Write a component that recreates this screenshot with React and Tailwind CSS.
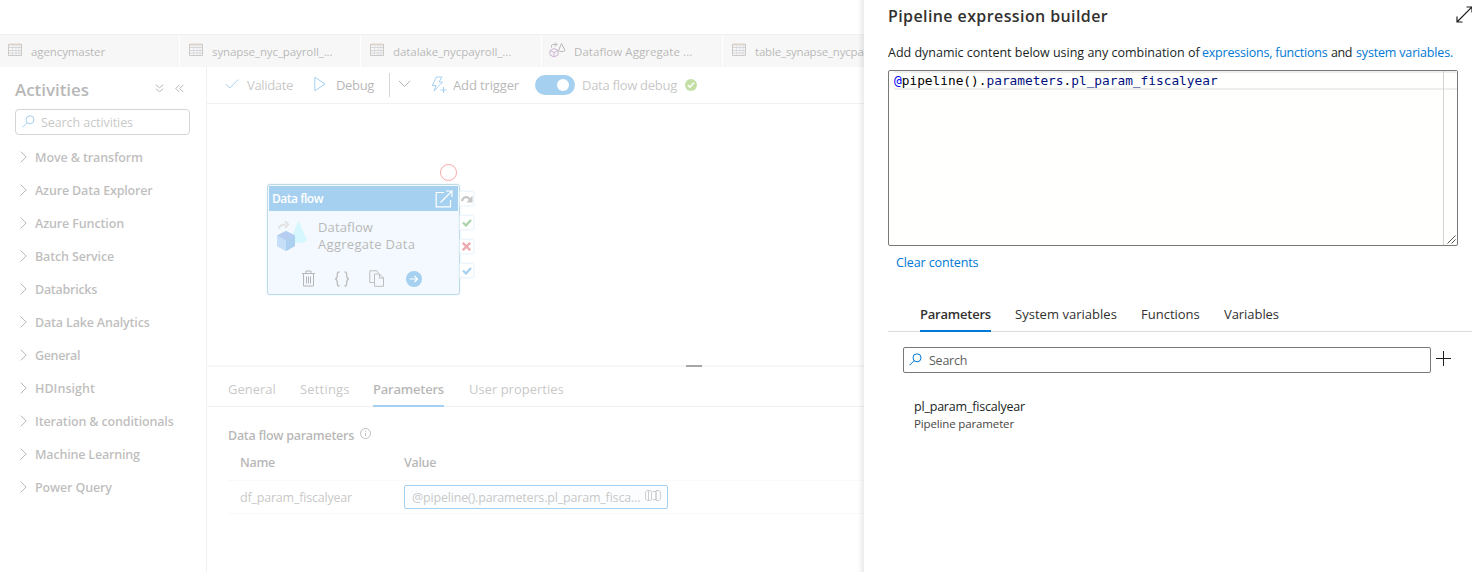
const tabs = [
  { label: 'agencymaster', tracking: 'tracking-[-0.1px]' },
  { label: 'synapse_nyc_payroll_...', tracking: 'tracking-[-0.1px]' },
  { label: 'datalake_nycpayroll_...', tracking: 'tracking-[-0.07px]' },
  { label: 'Dataflow Aggregate ...', tracking: 'tracking-[0.06px]', flow: true },
  { label: 'table_synapse_nycpa', tracking: 'tracking-[-0.2px]' },
];

const activities = [
  { label: 'Move & transform', tracking: 'tracking-[-0.12px]' },
  { label: 'Azure Data Explorer', tracking: 'tracking-[-0.16px]' },
  { label: 'Azure Function', tracking: 'tracking-[-0.13px]' },
  { label: 'Batch Service', tracking: 'tracking-[-0.14px]' },
  { label: 'Databricks', tracking: 'tracking-[-0.27px]' },
  { label: 'Data Lake Analytics', tracking: 'tracking-[-0.17px]' },
  { label: 'General', tracking: 'tracking-[-0.36px]' },
  { label: 'HDInsight', tracking: 'tracking-[0.03px]' },
  { label: 'Iteration & conditionals', tracking: 'tracking-[-0.15px]' },
  { label: 'Machine Learning', tracking: 'tracking-[-0.18px]' },
  { label: 'Power Query', tracking: 'tracking-[-0.15px]' },
];

function Svg({ w, h, className = '', children }) {
  return (
    <svg width={w} height={h} viewBox={`0 0 ${w} ${h}`} fill="none" stroke="currentColor" className={`shrink-0 ${className}`}>
      {children}
    </svg>
  );
}

function TableIcon() {
  return (
    <Svg w={14} h={13} className="text-[#6d665f]">
      <path d="M1 1.500h12" stroke="#a08468" strokeWidth="2" />
      <path d="M.5 1v11.500h13V1" />
      <path d="M1 4.500h12M1 7.500h12M1 10h12" strokeWidth=".7" />
      <path d="M4.500 3v9M8 3v9M11 3v9" stroke="#7d8fae" strokeWidth=".7" />
    </Svg>
  );
}

function DataflowOutline() {
  return (
    <Svg w={17} h={16} className="-translate-x-[2px] text-[#323130]">
      <path d="M1 8.500 5 6.500l4 2v4.500l-4 2-4-2zM1 8.500l4 2 4-2M5 10.500V15" stroke="#6b2c7a" />
      <path d="M2.500 5.500V4c0-1 .5-1.500 1.500-1.500h3.500M6 .5l2 2-2 2" />
      <path d="M12.500 1.500 9.500 8.500c1.500 1.500 5 1.500 6.500 0z" />
    </Svg>
  );
}

function SearchIcon({ className }) {
  return (
    <Svg w={13} h={13} className={className}>
      <circle cx="8" cy="4.800" r="4" />
      <path d="M5.200 7.600.5 12.300" />
    </Svg>
  );
}

function Check() {
  return (
    <Svg w={14} h={12} className="-translate-y-px text-[#0078d4]">
      <path d="m.8 6 4 4L13.300 1.500" />
    </Svg>
  );
}

function Port({ children }) {
  return <div className="flex h-[13px] w-[13px] items-center justify-center bg-white shadow-[0_0_2px_1px_#b8d8ee]">{children}</div>;
}

function Tab({ label, active, className }) {
  return (
    <div className={`relative flex items-center whitespace-nowrap text-[13px] ${active ? 'font-semibold' : ''} ${className}`}>
      {label}
      {active && <span className="absolute inset-x-0 -bottom-px h-[2px] bg-[#0078d4]" />}
    </div>
  );
}

function TopTabs() {
  return (
    <div className="flex h-[33px] overflow-hidden border-t border-[#d8d8d8] bg-[#e8e8e8]">
      {tabs.map((t) => (
        <div key={t.label} className="flex w-[181px] shrink-0 items-center border-r border-white pl-[9px] pt-px text-[#323130] first:-ml-px">
          <span className="flex w-[23px] -translate-y-0.5">{t.flow ? <DataflowOutline /> : <TableIcon />}</span>
          <span className={`whitespace-nowrap text-[11.5px] ${t.tracking}`}>{t.label}</span>
        </div>
      ))}
    </div>
  );
}

function Sidebar() {
  return (
    <aside className="w-[207px] shrink-0 border-r border-[#d5d5d5] text-[#323130]">
      <div className="flex h-[42px] items-center pl-[15px] pt-1">
        <h2 className="w-[140px] text-[17px] font-semibold tracking-[-0.05px]">Activities</h2>
        <Svg w={9} h={9} className="-translate-y-[2px]">
          <path d="m.8.8 3.700 3 3.700-3M.8 4.800l3.700 3 3.700-3" />
        </Svg>
        <Svg w={9} h={9} className="ml-[11px] -translate-y-[2px]">
          <path d="m4.300.8-3.500 3.700 3.500 3.700M8.300.8 4.800 4.500l3.500 3.700" />
        </Svg>
      </div>
      <div className="ml-[15px] flex h-[26px] w-[175px] items-center rounded-sm border border-[#8a8886] pl-1.5">
        <SearchIcon className="-translate-y-px text-[#0078d4]" />
        <span className="ml-1.5 pt-0.5 text-[12.5px] tracking-[-0.08px] text-[#605e5c]">Search activities</span>
      </div>
      <ul className="pt-[6px]">
        {activities.map((a) => (
          <li key={a.label} className="flex h-[33px] items-center pl-5">
            <Svg w={7} h={12} className="-translate-y-px">
              <path d="m.6.6 5.600 5.400L.6 11.400" />
            </Svg>
            <span className={`ml-2 pt-0.5 text-[12.5px] font-semibold text-[#484644] ${a.tracking}`}>{a.label}</span>
          </li>
        ))}
      </ul>
    </aside>
  );
}

function Toolbar() {
  return (
    <div className="flex h-[37px] items-center whitespace-nowrap border-b border-[#d8d8d8] pl-[18px] text-[13px] text-[#323130]">
      <Check />
      <span className="ml-2 w-[67px] pt-0.5 tracking-[-0.33px] text-[#605e5c]">Validate</span>
      <Svg w={12} h={16} className="-translate-y-px text-[#0078d4]">
        <path d="M.8 1.200v13.600L11 8z" />
      </Svg>
      <span className="ml-[10px] w-[53px] pt-0.5 tracking-[-0.34px]">Debug</span>
      <span className="h-6 w-px bg-[#8a8886]" />
      <Svg w={13} h={8} className="ml-[8px] -translate-y-px">
        <path d="m.8.8 5.700 5.700L12.200.8" />
      </Svg>
      <Svg w={16} h={18} className="ml-[20px] text-[#0078d4]">
        <path d="M5.500 1h5.500L8 6h3.500L3 15l2-5.500H1.200z" />
        <path d="M12.500 11v6M9.500 14h6" />
      </Svg>
      <span className="ml-[6px] w-[82px] pt-0.5 tracking-[-0.13px]">Add trigger</span>
      <span className="flex h-5 w-10 items-center justify-end rounded-full bg-[#0078d4] pr-[6px]">
        <span className="h-3 w-3 rounded-full bg-white" />
      </span>
      <span className="ml-[7px] w-[103px] pt-0.5 tracking-[-0.27px] text-[#605e5c]">Data flow debug</span>
      <span className="flex h-3 w-3 items-center justify-center rounded-full bg-[#57a300]">
        <Svg w={8} h={6} className="text-white">
          <path d="m.8 3 2.200 2.200L7 .8" strokeWidth="1.500" />
        </Svg>
      </span>
    </div>
  );
}

function ActivityNode() {
  return (
    <div className="absolute left-[60px] top-[80px] flex">
      <div className="flex h-[111px] w-[193px] flex-col rounded-[3px] border border-[#3f97b8] bg-[#dceefb] shadow-[0_0_2px_#9cc7dd]">
        <div className="mx-px mt-px flex h-[25px] items-center justify-between bg-[#0078d4] pl-[3px] pr-[5px] text-white">
          <span className="text-[12px] font-semibold tracking-[-0.49px]">Data flow</span>
          <Svg w={18} h={18}>
            <path d="M9 2.500H1.200v14.300h14.300V10M5.500 12.500 16.500 1.500M11 1h6v6" strokeWidth="1.200" />
          </Svg>
        </div>
        <div className="flex h-[50px] items-center pl-[9px]">
          <svg width="30" height="30" viewBox="0 0 30 30" className="shrink-0">
            <path d="M21.500 0 13 19c2 4 15 4 17 0z" fill="#8ae8f8" />
            <path d="M0 14.500 9 10l9 4.500V25l-9 5-9-5z" fill="#5a9cf0" />
            <path d="M0 14.500 9 19v11l-9-5z" fill="#5ea0ef" />
            <path d="M9 19l9-4.500V25l-9 5z" fill="#0f78d4" />
            <path d="M0 14.500 9 10l9 4.500L9 19z" fill="#2f6fd6" />
            <path d="M2 8c0-4 3-4.500 7-4.500M8 0l3.500 3.500L8 7" fill="none" stroke="#b0b0b0" strokeWidth="1.800" />
          </svg>
          <div className="ml-[11px] text-[13px] leading-[17px] text-[#323130]">
            <div className="tracking-[0.12px]">Dataflow</div>
            <div className="tracking-[0.3px]">Aggregate Data</div>
          </div>
        </div>
        <div className="flex items-center pl-[34px] pt-[9px] text-[#323130]">
          <Svg w={13} h={17}>
            <path d="M0 3.500h13M4 3V1h5v2M1.500 4v12h10V4M4.500 6.500v7M6.500 6.500v7M8.500 6.500v7" />
          </Svg>
          <Svg w={16} h={16} className="ml-[19px] text-[#484644]">
            <path strokeWidth="1.300" d="M5.500 .8C3.500 .8 3.300 2 3.300 3.500 3.300 6 3.500 7.500 1.300 8 3.500 8.500 3.300 10 3.300 12.500c0 1.500.2 2.700 2.200 2.700M10.500 .8c2 0 2.200 1.200 2.200 2.700 0 2.500-.2 4 2 4.500-2.200.5-2 2-2 4.500 0 1.500-.2 2.700-2.200 2.700" />
          </Svg>
          <Svg w={15} h={17} className="ml-[19px] text-[#484644]">
            <path d="M5 12.500H.8V.8h7l2 2.500M5.500 4h5l4 4v8.300h-9zM10.500 4v4h4" />
          </Svg>
          <span className="ml-[22px] flex h-4 w-4 items-center justify-center rounded-full bg-[#0078d4]">
            <Svg w={10} h={8} className="text-white">
              <path d="M.5 4h8M5.500 1l3 3-3 3" strokeWidth="1.200" />
            </Svg>
          </span>
        </div>
      </div>
      <div className="flex flex-col gap-[11px] pt-[8px]">
        <Port>
          <Svg w={12} h={8} className="text-[#605e5c]">
            <path d="M.8 6c2-5 6-5 8.500-1" strokeWidth="2.200" />
            <path d="M11.500.5v7H5.500z" fill="currentColor" stroke="none" />
          </Svg>
        </Port>
        <Port>
          <Svg w={10} h={8} className="text-[#107c10]"><path d="m1 3.500 3 3L9 1" strokeWidth="2.300" /></Svg>
        </Port>
        <Port>
          <Svg w={9} h={9} className="text-[#c50f1f]"><path d="m.8.8 7.400 7.400M8.200.8.8 8.200" strokeWidth="2.300" /></Svg>
        </Port>
        <Port>
          <Svg w={10} h={8} className="text-[#0078d4]"><path d="m1 3.500 3 3L9 1" strokeWidth="2.300" /></Svg>
        </Port>
      </div>
      <span className="absolute left-[173px] top-[-20px] h-[17px] w-[17px] rounded-full border border-[#f00000]" />
    </div>
  );
}

function PropertiesPanel() {
  return (
    <section className="flex flex-1 flex-col text-[#323130]">
      <div className="flex h-[2px] bg-[#e8e8e8]">
        <span className="ml-[479px] w-4 bg-black" />
      </div>
      <div className="flex h-[40px] border-b border-[#d8d8d8] pl-[21px] pt-1.5 text-[#605e5c]">
        <Tab label="General" className="mr-6 w-12" />
        <Tab label="Settings" className="mr-[23px] w-[50px] tracking-[0.18px]" />
        <Tab label="Parameters" active className="mr-[25px] w-[71px] tracking-[-0.22px] text-[#323130]" />
        <Tab label="User properties" />
      </div>
      <div className="pl-[21px]">
        <div className="flex h-[39px] items-center pt-[18px]">
          <span className="w-[132px] whitespace-nowrap pt-0.5 text-[12.500px] font-semibold tracking-[-0.27px]">Data flow parameters</span>
          <Svg w={11} h={11} className="-translate-y-0.5">
            <circle cx="5.500" cy="5.500" r="5" strokeWidth=".9" />
            <path d="M5.500 4.800V8M5.500 2.800v1" strokeWidth=".9" />
          </Svg>
        </div>
        <div className="flex h-[35px] items-center border-b border-[#ededed] pl-3 text-[12.500px] font-semibold">
          <span className="w-[164px] tracking-[-0.29px]">Name</span>
          <span className="tracking-[-0.33px]">Value</span>
        </div>
        <div className="flex h-[33px] items-center border-b border-[#ededed] pl-3 text-[12.500px] text-[#605e5c]">
          <span className="w-[164px] pt-0.5 tracking-[-0.2px]">df_param_fiscalyear</span>
          <div className="flex h-6 w-[264px] items-center rounded-[2px] border border-[#0078d4] bg-[#f3fafe] pl-[7px]">
            <span className="w-[233px] whitespace-nowrap pt-0.5 tracking-[-0.18px]">@pipeline().parameters.pl_param_fisca...</span>
            <Svg w={16} h={11} className="-translate-y-0.5 text-[#605e5c]">
              <path d="M3.500.5H2L.6 2v7L2 10.500h1.500M5.500.5h-2v10h2l1-1.500V2zM7.500 1.500h3.500v8H7.500M11 .5h3l1.400 1.500v7L14 10.500h-3z" strokeWidth=".9" />
            </Svg>
          </div>
        </div>
      </div>
    </section>
  );
}

function ExpressionBuilder() {
  return (
    <section className="relative flex h-full w-[608px] shrink-0 flex-col overflow-hidden bg-white pl-6 text-[#201f1e]">
      <div className="flex h-8 items-center justify-between">
        <h1 className="text-[16px] font-semibold tracking-[0.4px] text-[#323130]">Pipeline expression builder</h1>
        <Svg w={17} h={17} className="mr-[-1px] -translate-y-[2px]">
          <path d="M1 16 16 1M10.500 1H16v5.500M1 10.500V16h5.500" strokeWidth="1.200" />
        </Svg>
      </div>
      <p className="flex h-[38px] items-center whitespace-pre pt-1 text-[12.500px] tracking-[-0.17px]">
        <span className="w-[314px] tracking-[-0.01px]">Add dynamic content below using any combination of </span>
        <span className="w-[129px] tracking-[-0.22px] text-[#0078d4]">expressions, functions</span>
        <span className="w-[25px] tracking-[-0.4px]">and</span>
        <span className="text-[#0078d4]">system variables.</span>
      </p>
      <div className="relative h-[176px] w-[570px] rounded-[2px] border border-[#7a7876] bg-[#fffffe] pl-[5px]">
        <div className="flex h-[19px] items-center border-y-2 border-[#eeeeee] font-['DejaVu_Sans_Mono',monospace] text-[12.800px] text-[#001080]">
          <span className="text-[#0000ff]">@</span>
          <span className="text-black">pipeline().</span>
          <span>parameters</span>
          <span className="text-black">.</span>
          <span>pl_param_fiscalyear</span>
        </div>
        <span className="absolute inset-y-0 right-[13px] w-px bg-[#d4d4d4]" />
        <Svg w={9} h={9} className="absolute bottom-px right-px text-[#444]">
          <path d="M.5 8.500l8-8M4.500 8.500l4-4" strokeWidth=".9" />
        </Svg>
      </div>
      <div className="flex h-8 items-center pl-2 pt-0.5 text-[12.500px] tracking-[-0.12px] text-[#0078d4]">Clear contents</div>
      <div className="mt-[18px] flex h-9 border-b border-[#dcdcdc] pl-8 pt-[3px] text-[#323130]">
        <Tab label="Parameters" active className="mr-6 w-[71px] tracking-[-0.22px]" />
        <Tab label="System variables" className="mr-6 w-[102px] tracking-[0.03px]" />
        <Tab label="Functions" className="mr-6 w-[59px]" />
        <Tab label="Variables" className="tracking-[-0.06px]" />
      </div>
      <div className="mt-[15px] flex items-center pl-[15px]">
        <div className="flex h-[26px] w-[528px] items-center rounded-[2px] border border-[#7a7876] pl-1.5">
          <SearchIcon className="-translate-x-px -translate-y-px text-[#0078d4]" />
          <span className="ml-1.5 pt-0.5 text-[12.500px] tracking-[-0.24px] text-[#605e5c]">Search</span>
        </div>
        <Svg w={15} h={15} className="ml-[5px] -translate-y-[2px]">
          <path d="M7.500 0v15M0 7.500h15" />
        </Svg>
      </div>
      <div className="pl-[26px] pt-[25px]">
        <div className="text-[12.500px] leading-[18px] tracking-[-0.2px]">pl_param_fiscalyear</div>
        <div className="text-[11.500px] leading-[16px] tracking-[-0.14px] text-[#484644]">Pipeline parameter</div>
      </div>
    </section>
  );
}

export default function App() {
  return (
    <div className="flex h-[572px] w-[1472px] overflow-hidden bg-white font-['Open_Sans','Noto_Sans',sans-serif]">
      <main className="relative flex w-[864px] shrink-0 flex-col overflow-hidden pt-[34px]">
        <TopTabs />
        <div className="flex flex-1">
          <Sidebar />
          <div className="flex min-w-0 flex-1 flex-col">
            <Toolbar />
            <div className="relative h-[261px]">
              <ActivityNode />
            </div>
            <PropertiesPanel />
          </div>
        </div>
        <div className="absolute inset-0 bg-white/65" />
        <div className="absolute inset-y-0 right-0 w-[6px] bg-linear-to-r from-transparent to-black/8" />
      </main>
      <ExpressionBuilder />
    </div>
  );
}
